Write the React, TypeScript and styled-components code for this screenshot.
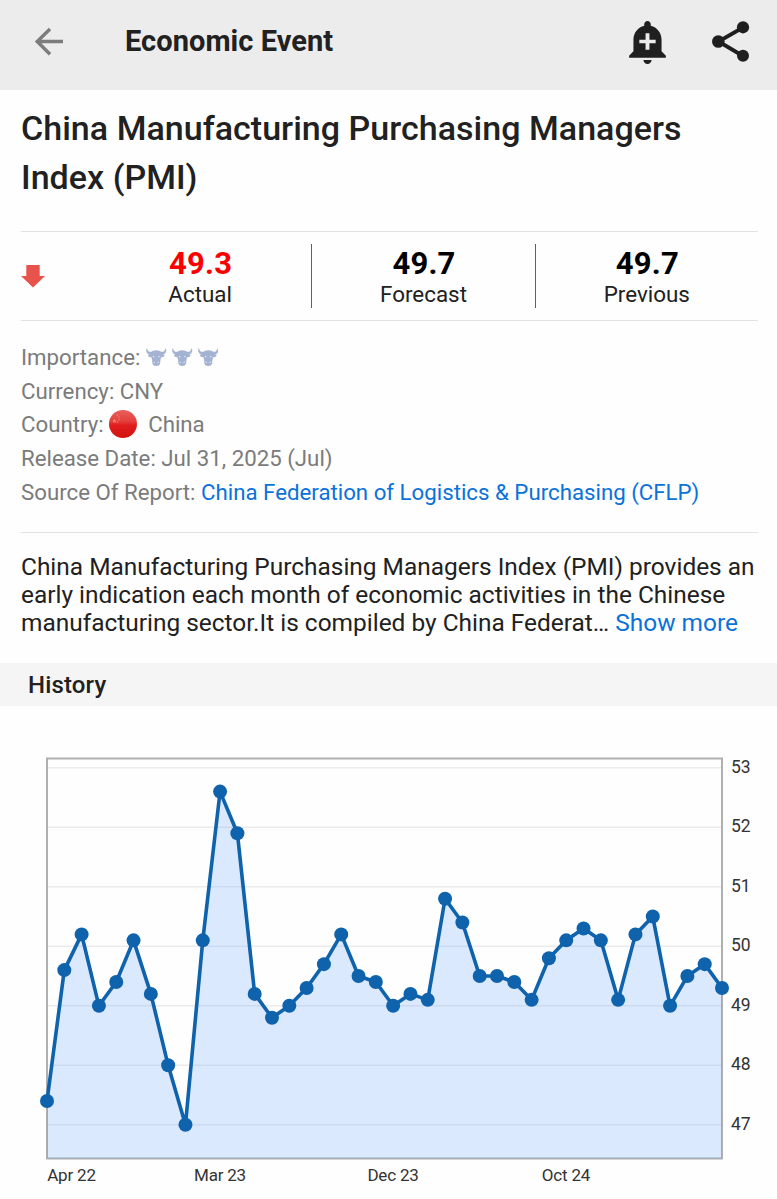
import React from "react";
import styled, { createGlobalStyle } from "styled-components";

const GlobalStyle = createGlobalStyle`
  * { box-sizing: border-box; }
  body {
    margin: 0;
    background: #fefefe;
    color: #212121;
    font-family: Roboto, "Liberation Sans", sans-serif;
  }
`;

const Page = styled.main`
  display: flex;
  flex-direction: column;
  width: 777px;
  height: 1199px;
  overflow: hidden;
`;

const TopBar = styled.header`
  display: flex;
  align-items: center;
  height: 90px;
  padding: 0 24px 7px 34px;
  background: #ececec;
`;

const BarTitle = styled.h1`
  flex: 1;
  margin: 0 0 2px 61px;
  font-size: 29px;
  font-weight: 700;
  line-height: 40px;
  letter-spacing: 0.05px;
`;

const Actions = styled.div`
  display: flex;
  align-items: center;
  gap: 38px;
`;

const Content = styled.section`
  padding: 0 19px 0 21px;
`;

const EventTitle = styled.h2`
  margin: 0;
  padding-top: 14px;
  height: 141px;
  font-size: 34px;
  font-weight: 500;
  line-height: 49px;
  letter-spacing: 0.03px;
  white-space: nowrap;
`;

const Stats = styled.div`
  display: flex;
  align-items: center;
  height: 90px;
  border-top: 1px solid #e2e2e2;
  border-bottom: 1px solid #e2e2e2;
`;

const Trend = styled.div`
  display: flex;
  width: 67px;
`;

const Stat = styled.div<{ $divided?: boolean }>`
  flex: 1;
  display: flex;
  flex-direction: column;
  align-items: center;
  height: 64px;
  padding-top: 1px;
  border-left: 1px solid ${(p) => (p.$divided ? "#616161" : "transparent")};
`;

const StatValue = styled.span<{ $color: string }>`
  color: ${(p) => p.$color};
  font-size: 31px;
  font-weight: 700;
  line-height: 37px;
  letter-spacing: 0.2px;
  padding-left: 1px;
`;

const StatLabel = styled.span`
  font-size: 22.4px;
  line-height: 25px;
`;

const Details = styled.dl`
  margin: 0;
  padding-top: 19px;
  height: 212px;
  border-bottom: 1px solid #e2e2e2;
  color: #7b7b7b;
  font-size: 22.25px;
`;

const Detail = styled.div`
  display: flex;
  align-items: center;
  height: 33.7px;
  white-space: pre;

  dt, dd { margin: 0; }
  dd { display: flex; align-items: center; }
`;

const Bulls = styled.dd`
  gap: 5.2px;
  padding-left: 6px;
`;

const CountryName = styled.span`
  margin-left: 11px;
`;

const Link = styled.a`
  color: #0a72da;
  text-decoration: none;
`;

const Description = styled.p`
  margin: 0;
  padding-top: 20px;
  height: 130px;
  font-size: 24.45px;
  line-height: 28px;
  white-space: nowrap;
`;

const SectionHeader = styled.h3`
  display: flex;
  align-items: center;
  height: 43px;
  margin: 0;
  padding-left: 28px;
  background: #f5f5f5;
  font-size: 24px;
  font-weight: 500;
  letter-spacing: 0.15px;
`;

const Chart = styled.svg`
  display: block;
  font-family: Roboto, "Liberation Sans", sans-serif;
`;

const MonthLabel = styled.text`
  font-size: 17px;
  letter-spacing: -0.2px;
  text-anchor: middle;
  fill: #333;
`;

const BackIcon = () => (
  <svg width="30" height="30" viewBox="0 0 30 30" fill="none" stroke="#7c7c7c" strokeWidth="3.4">
    <path d="M29 14.5H3M16 2 3.2 14.5 16 27.3" />
  </svg>
);

const BellIcon = () => (
  <svg width="49" height="49" viewBox="0 0 24 24" fill="#1f1f1f">
    <path d="M10.01 21.01c0 1.1.89 1.99 1.99 1.99s1.99-.89 1.99-1.99h-3.98zm8.87-4.19V11c0-3.25-2.25-5.97-5.29-6.69v-.72C13.59 2.71 12.88 2 12 2s-1.59.71-1.59 1.59v.72C7.37 5.03 5.12 7.75 5.12 11v5.82L3 18.94V20h18v-1.06l-2.12-2.12zM16 12.9h-3.05v3.1h-1.9v-3.1H8v-1.8h3.05V8h1.9v3.1H16z" />
  </svg>
);

const ShareIcon = () => (
  <svg width="43" height="43" viewBox="0 0 43 43" fill="#1f1f1f">
    <path d="M33 7.5 8.5 21.5 33 36" fill="none" stroke="#1f1f1f" strokeWidth="3.8" />
    <circle cx="33" cy="7.3" r="6.1" />
    <circle cx="8.3" cy="21.5" r="6.3" />
    <circle cx="33" cy="35.8" r="6" />
  </svg>
);

const DownArrow = () => (
  <svg width="24" height="23" viewBox="0 0 24 23">
    <path d="M5.3 0H18.7V11H24L12 22.5 0 11H5.3z" fill="#e8534b" />
  </svg>
);

const BullIcon = () => (
  <svg width="20.5" height="18" viewBox="0 0 61 54" fill="#a3b3d1">
    <path d="M2 0C4 4 4 8 9 11Q12 12 16 11L21 8Q30 5 40 8L45 11Q49 12 52 11C57 8 57 4 59 0C62 4 61 15 55 18Q52 20 48 19L56 21Q54 29 45 28L43 36L42 47Q40 54 30.500 54T19 47L18 36L16 28Q7 29 5 21L13 19Q9 20 6 18C0 15-1 4 2 0z" />
    <path d="M21 23l5 4-5 1zM40 23l-5 4 5 1zM22 42q4-2 5 2-4 1-5-2zM39 42q-4-2-5 2 4 1 5-2z" fill="#fefefe" />
  </svg>
);

const ChinaFlag = () => (
  <svg width="28" height="28" viewBox="0 0 28 28">
    <defs>
      <linearGradient id="flagRed" x1="0" y1="0" x2="0" y2="1">
        <stop offset="0" stopColor="#e9605c" />
        <stop offset=".4" stopColor="#e4403e" />
        <stop offset=".55" stopColor="#de1d1c" />
        <stop offset="1" stopColor="#d31312" />
      </linearGradient>
    </defs>
    <circle cx="14" cy="14" r="14" fill="url(#flagRed)" />
    <path d="M5.5 8.700l.6 1.500 1.600.1-1.300 1 .5 1.600-1.400-.9-1.400.9.400-1.600-1.200-1 1.600-.1z" fill="#ef8a68" />
    <g fill="#ef8a68">
      <circle cx="8.500" cy="5" r=".8" />
      <circle cx="10" cy="7" r=".7" />
      <circle cx="10" cy="9.800" r=".7" />
      <circle cx="8.500" cy="12" r=".7" />
    </g>
  </svg>
);

const readings = [
  47.4, 49.6, 50.2, 49.0, 49.4, 50.1, 49.2, 48.0, 47.0, 50.1,
  52.6, 51.9, 49.2, 48.8, 49.0, 49.3, 49.7, 50.2, 49.5, 49.4,
  49.0, 49.2, 49.1, 50.8, 50.4, 49.5, 49.5, 49.4, 49.1, 49.8,
  50.1, 50.3, 50.1, 49.1, 50.2, 50.5, 49.0, 49.5, 49.7, 49.3,
];
const ticks = [53, 52, 51, 50, 49, 48, 47];
const months = [
  { label: "Apr 22", x: 71.5 },
  { label: "Mar 23", x: 220 },
  { label: "Dec 23", x: 393 },
  { label: "Oct 24", x: 566 },
];

const plot = { left: 47, right: 722, top: 52.5, bottom: 452.5 };
const xAt = (i: number) => plot.left + (i * (plot.right - plot.left)) / (readings.length - 1);
const yAt = (v: number) => 61.8 + (53 - v) * 59.5;

const HistoryChart = () => {
  const line = readings.map((v, i) => `${xAt(i)},${yAt(v)}`).join(" ");
  return (
    <Chart width="777" height="493" viewBox="0 0 777 493">
      {ticks.map((t) => (
        <line key={t} x1={plot.left} x2={plot.right} y1={yAt(t)} y2={yAt(t)} stroke="#ebebeb" strokeWidth="1.6" />
      ))}
      <rect
        x={plot.left}
        y={plot.top}
        width={plot.right - plot.left}
        height={plot.bottom - plot.top}
        fill="none"
        stroke="#b0b0b0"
        strokeWidth="2"
      />
      <polygon
        points={`${plot.left},${plot.bottom} ${line} ${plot.right},${plot.bottom}`}
        fill="#4a96ff"
        fillOpacity="0.2"
      />
      <polyline points={line} fill="none" stroke="#0f62ac" strokeWidth="3.6" strokeLinejoin="round" />
      {readings.map((v, i) => (
        <circle key={i} cx={xAt(i)} cy={yAt(v)} r="7" fill="#0f62ac" />
      ))}
      {ticks.map((t) => (
        <text key={t} x="731" y={yAt(t) + 5} fontSize="17.5" fill="#333">{t}</text>
      ))}
      {months.map((m) => (
        <MonthLabel key={m.label} x={m.x} y="475">{m.label}</MonthLabel>
      ))}
    </Chart>
  );
};

export default function App() {
  return (
    <Page>
      <GlobalStyle />
      <TopBar>
        <BackIcon />
        <BarTitle>Economic Event</BarTitle>
        <Actions>
          <BellIcon />
          <ShareIcon />
        </Actions>
      </TopBar>
      <Content>
        <EventTitle>
          China Manufacturing Purchasing Managers
          <br />
          Index (PMI)
        </EventTitle>
        <Stats>
          <Trend><DownArrow /></Trend>
          <Stat>
            <StatValue $color="#fb0000">49.3</StatValue>
            <StatLabel>Actual</StatLabel>
          </Stat>
          <Stat $divided>
            <StatValue $color="#000">49.7</StatValue>
            <StatLabel>Forecast</StatLabel>
          </Stat>
          <Stat $divided>
            <StatValue $color="#000">49.7</StatValue>
            <StatLabel>Previous</StatLabel>
          </Stat>
        </Stats>
        <Details>
          <Detail>
            <dt>Importance:</dt>
            <Bulls><BullIcon /><BullIcon /><BullIcon /></Bulls>
          </Detail>
          <Detail><dt>Currency: </dt><dd>CNY</dd></Detail>
          <Detail>
            <dt>Country: </dt>
            <dd><ChinaFlag /><CountryName>China</CountryName></dd>
          </Detail>
          <Detail><dt>Release Date: </dt><dd>Jul 31, 2025 (Jul)</dd></Detail>
          <Detail>
            <dt>Source Of Report: </dt>
            <dd><Link>China Federation of Logistics &amp; Purchasing (CFLP)</Link></dd>
          </Detail>
        </Details>
        <Description>
          China Manufacturing Purchasing Managers Index (PMI) provides an
          <br />
          early indication each month of economic activities in the Chinese
          <br />
          manufacturing sector.It is compiled by China Federat… <Link>Show more</Link>
        </Description>
      </Content>
      <SectionHeader>History</SectionHeader>
      <HistoryChart />
    </Page>
  );
}
